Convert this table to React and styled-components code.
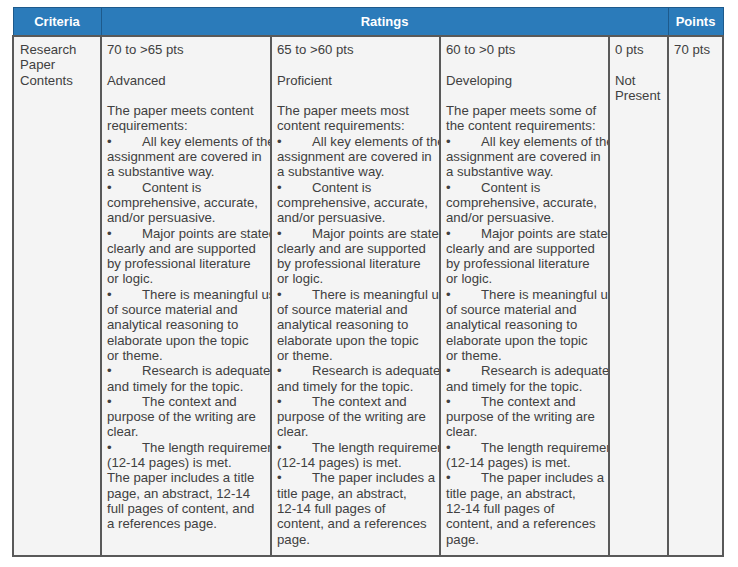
import React from 'react';
import styled, { createGlobalStyle } from 'styled-components';

const GlobalStyle = createGlobalStyle`
    html, body {
        margin: 0;
        padding: 0;
        background: #fff;
    }
    body {
        font-family: "Liberation Sans", Arial, sans-serif;
    }
`;

const Page = styled.div`
    padding: 7px 0 0 12px;
`;

const Table = styled.table`
    width: 710px;
    border-collapse: collapse;
    table-layout: fixed;
    font-size: 13.2px;
    line-height: 15.3px;
    color: #404040;
`;

const HeadCell = styled.th`
    height: 27px;
    padding: 0 4px;
    background: #2b7bba;
    border: 1px solid #1d5a8c;
    color: #fff;
    font-weight: bold;
    font-size: 13px;
    text-align: center;
    vertical-align: middle;
`;

const Cell = styled.td`
    background: #f4f4f4;
    border: 2px solid #595959;
    padding: 5px ${(p) => p.$right || 6}px 8px ${(p) => p.$left || 5}px;
    vertical-align: top;
    overflow: hidden;
`;

const Block = styled.div`
    & + & {
        margin-top: 15.3px;
    }
`;

const HeadLine = styled.div`
    white-space: nowrap;
`;

const Bullet = styled.span`
    display: inline-block;
    width: 35px;
`;

const Keep = styled.span`
    white-space: nowrap;
`;

const bullets = [
    ['All key elements of the', 'assignment are covered in a substantive way.'],
    ['Content is', 'comprehensive, accurate, and/or persuasive.'],
    ['Major points are stated', 'clearly and are supported by professional literature or logic.'],
    ['There is meaningful use', 'of source material and analytical reasoning to elaborate upon the topic or theme.'],
    ['Research is adequate', 'and timely for the topic.'],
    ['The context and', 'purpose of the writing are clear.'],
    ['The length requirement', <>(<Keep>12-14</Keep> pages) is met.</>],
];

const includes = (
    <>
        title page, an abstract, <Keep>12-14</Keep> full pages of content, and a references page.
    </>
);

const ratings = [
    { pts: '70 to >65 pts', title: 'Advanced', intro: 'The paper meets content requirements:', plainLast: true, right: 8 },
    { pts: '65 to >60 pts', title: 'Proficient', intro: 'The paper meets most content requirements:' },
    { pts: '60 to >0 pts', title: 'Developing', intro: 'The paper meets some of the content requirements:' },
];

const BulletItem = ({ head, rest }) => (
    <>
        <HeadLine>
            <Bullet>•</Bullet>
            {head}
        </HeadLine>
        <div>{rest}</div>
    </>
);

const Rating = ({ pts, title, intro, plainLast, right }) => (
    <Cell $right={right}>
        <Block>{pts}</Block>
        <Block>{title}</Block>
        <Block>
            <div>{intro}</div>
            {bullets.map(([head, rest]) => (
                <BulletItem key={head} head={head} rest={rest} />
            ))}
            {plainLast ? (
                <div>The paper includes a {includes}</div>
            ) : (
                <BulletItem head="The paper includes a" rest={includes} />
            )}
        </Block>
    </Cell>
);

const App = () => (
    <Page>
        <GlobalStyle />
        <Table>
            <colgroup>
                <col style={{ width: 88 }} />
                <col style={{ width: 170 }} />
                <col style={{ width: 169 }} />
                <col style={{ width: 169 }} />
                <col style={{ width: 59 }} />
                <col style={{ width: 55 }} />
            </colgroup>
            <thead>
                <tr>
                    <HeadCell>Criteria</HeadCell>
                    <HeadCell colSpan={4}>Ratings</HeadCell>
                    <HeadCell>Points</HeadCell>
                </tr>
            </thead>
            <tbody>
                <tr>
                    <Cell $left={6}>
                        Research
                        <br />
                        Paper
                        <br />
                        Contents
                    </Cell>
                    {ratings.map((r) => (
                        <Rating key={r.pts} {...r} />
                    ))}
                    <Cell $right={4}>
                        <Block>0 pts</Block>
                        <Block>Not Present</Block>
                    </Cell>
                    <Cell $right={4}>70 pts</Cell>
                </tr>
            </tbody>
        </Table>
    </Page>
);

export default App;
